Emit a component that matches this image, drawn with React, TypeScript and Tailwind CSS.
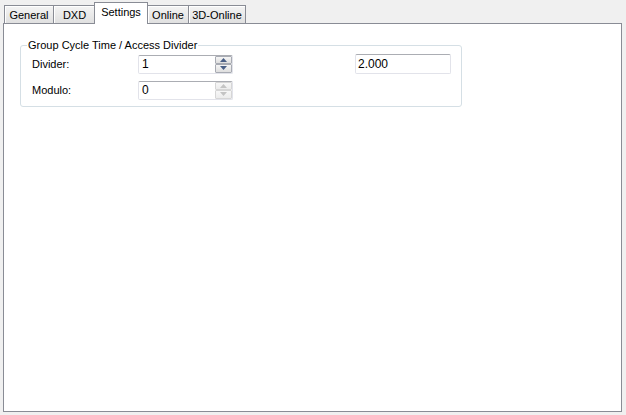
import React from "react";

const font = { fontFamily: '"Liberation Sans", Arial, sans-serif' };

function Tab({ label, selected, cls }: { label: string; selected?: boolean; cls: string }) {
  if (selected) {
    return (
      <div
        className={`relative z-10 -mb-px flex h-[22px] items-start justify-center border border-b-0 border-[#898c95] bg-white pt-[3px] text-[11px] leading-[13px] text-black ${cls}`}
      >
        {label}
      </div>
    );
  }
  return (
    <div
      className={`flex h-[18px] items-start justify-center border border-b-0 border-[#898c95] bg-gradient-to-b from-[#f4f4f4] to-[#e0e0e0] pt-[3px] text-[11px] leading-[13px] text-black shadow-[inset_1px_1px_0_#ffffff] ${cls}`}
    >
      {label}
    </div>
  );
}

function Arrow({ up, color }: { up?: boolean; color: string }) {
  return (
    <svg width="7" height="4" viewBox="0 0 7 4">
      {up ? <path d="M0 4 L3.5 0 L7 4 Z" fill={color} /> : <path d="M0 0 L7 0 L3.5 4 Z" fill={color} />}
    </svg>
  );
}

function SpinBox({ value, disabled }: { value: string; disabled?: boolean }) {
  const arrow = disabled ? "#c4c4c4" : "#4a5f86";
  const btn = disabled
    ? "border-[#d6d6d6] from-[#f7f7f7] to-[#ececec]"
    : "border-[#a8abb3] from-[#f6f6f6] to-[#dedede]";
  return (
    <div className="flex h-[19px] w-[95px] rounded-[2px] border border-[#e2e3ea] border-t-[#abadb3] bg-white">
      <div className="flex flex-1 items-center pl-[3px] text-[12px] leading-[14px] text-black">{value}</div>
      <div className="flex w-[17px] flex-col">
        <div className={`flex flex-1 items-center justify-center rounded-[1px] border bg-gradient-to-b ${btn}`}>
          <Arrow up color={arrow} />
        </div>
        <div className={`flex flex-1 items-center justify-center rounded-[1px] border bg-gradient-to-b ${btn}`}>
          <Arrow color={arrow} />
        </div>
      </div>
    </div>
  );
}

export default function App() {
  return (
    <div className="h-[415px] w-[626px] overflow-hidden bg-[#f0f0f0]" style={font}>
      <div className="flex h-[23px] items-end pl-[4px]">
        <Tab label="General" cls="w-[50px]" />
        <Tab label="DXD" cls="-ml-px w-[43px]" />
        <Tab label="Settings" selected cls="-ml-[2px] w-[54px]" />
        <Tab label="Online" cls="-ml-px w-[42px]" />
        <Tab label="3D-Online" cls="-ml-px w-[58px]" />
      </div>
      <div className="ml-[3px] h-[389px] w-[619px] border border-[#898c95] bg-white">
        <fieldset className="ml-[16px] mt-[15px] w-[442px] rounded-[3px] border border-[#d5dfe5]">
          <legend className="ml-[6px] px-[1px] text-[11px] leading-[13px] text-black">
            Group Cycle Time / Access Divider
          </legend>
          <div className="flex flex-col pb-[6px] pl-[11px] pt-[2px] text-[11px] text-black">
            <div className="flex h-[20px] items-center">
              <div className="w-[106px] pt-[1px]">Divider:</div>
              <SpinBox value="1" />
              <div className="ml-[122px] flex h-[20px] w-[96px] items-center rounded-[2px] border border-[#e2e3ea] border-t-[#abadb3] bg-white pl-[2px] text-[12px]">
                2.000
              </div>
            </div>
            <div className="mt-[6px] flex h-[20px] items-center">
              <div className="w-[106px] pt-[1px]">Modulo:</div>
              <SpinBox value="0" disabled />
            </div>
          </div>
        </fieldset>
      </div>
    </div>
  );
}
